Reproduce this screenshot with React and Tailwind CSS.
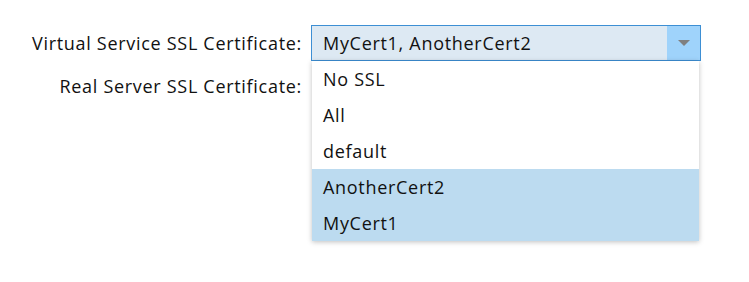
import React from "react";

const options = [
  { label: "No SSL", selected: false },
  { label: "All", selected: false },
  { label: "default", selected: false },
  { label: "AnotherCert2", selected: true },
  { label: "MyCert1", selected: true },
];

export default function App() {
  return (
    <div
      className="w-[749px] h-[282px] bg-white text-[#111] overflow-hidden tracking-[0.7px]"
      style={{ fontFamily: '"Open Sans", "Lato", sans-serif' }}
    >
      <div className="pt-[25px] flex">
        <div className="w-[302px] flex flex-col items-end text-[18px]">
          <div className="h-[36px] flex items-center">Virtual Service SSL Certificate:</div>
          <div className="h-[50px] flex items-center">Real Server SSL Certificate:</div>
        </div>
        <div className="ml-[9px] relative">
          <div className="w-[390px] h-[36px] border border-[#3d8fd4] bg-[#dde9f3] flex">
            <div className="flex-1 flex items-center pl-[11px] text-[18px]">MyCert1, AnotherCert2</div>
            <div className="w-[33px] bg-[#9fd3fb] flex items-center justify-center">
              <svg width="12" height="7" viewBox="0 0 12 7">
                <polygon points="0,0 12,0 6,6" fill="#7f7f7f" />
              </svg>
            </div>
          </div>
          <div className="absolute left-[1px] top-[36px] w-[387px] bg-white shadow-[0_1px_5px_rgba(0,0,0,0.25)] z-10">
            {options.map((o) => (
              <div
                key={o.label}
                className={`h-[36px] flex items-center pl-[11px] text-[18px] ${o.selected ? "bg-[#bcdbf0]" : "bg-white"}`}
              >
                {o.label}
              </div>
            ))}
          </div>
        </div>
      </div>
    </div>
  );
}
